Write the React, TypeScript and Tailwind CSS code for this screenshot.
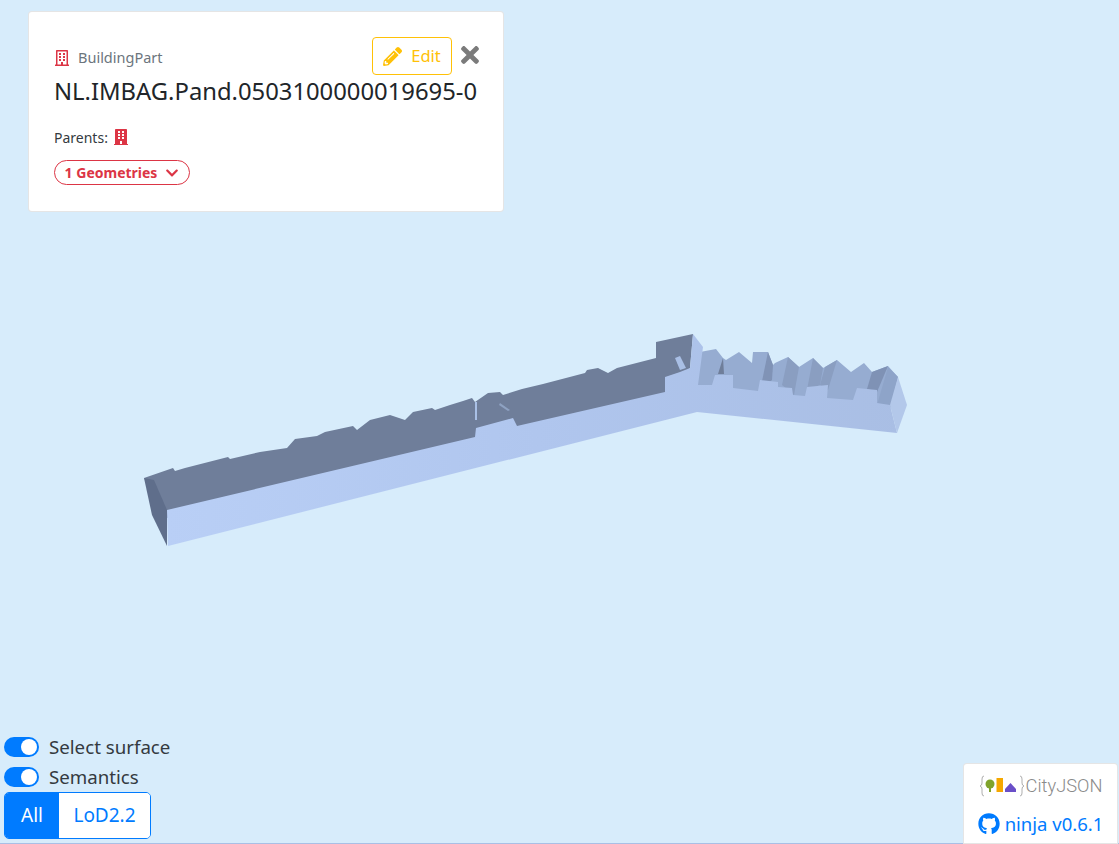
import { FaBuilding, FaRegBuilding, FaPencilAlt, FaTimes, FaChevronDown, FaGithub } from 'react-icons/fa';

const font = { fontFamily: '"Noto Sans", "Open Sans", sans-serif' };

function Model() {
  return (
    <svg className="absolute inset-0 blur-[0.4px]" width="1119" height="844" viewBox="0 0 1119 844">
      <defs>
        <linearGradient id="wall" x1="167" y1="0" x2="907" y2="0" gradientUnits="userSpaceOnUse">
          <stop offset="0" stopColor="#b9cff6" />
          <stop offset="0.5" stopColor="#b0c6ee" />
          <stop offset="1" stopColor="#a9bee4" />
        </linearGradient>
      </defs>
      {/* back roof face of the long wing */}
      <polygon
        fill="#6f7e9a"
        points="144,478 173,468 175,471 185,468 228,457 230,459 260,452 287,448 295,439 317,436 325,432 353,426 357,430 370,420 390,415 405,420 413,412 432,408 435,410 450,405 463,401 472,398 475,402 488,393 500,392 503,395 522,389 543,384 585,373 587,370 598,368 608,373 617,368 656,358 656,342 693,334 690,368 665,400 517,434 475,445 167,518"
      />
      <polygon fill="#5f6e8b" points="144,478 154,480 167,510 167,546 152,515" />
      {/* gables on the short wing, the wall below cuts their lower edge */}
      <polygon
        fill="#96acd1"
        points="696,390 700,352 716,349 723,358 726,360 739,352 752,363 753,352 768,352 773,365 775,363 788,357 799,367 813,358 823,368 825,367 837,360 851,372 864,363 872,372 888,366 898,377 890,410 700,395"
      />
      <polygon fill="#6f7e9a" points="723,358 724,374 718,374" />
      <polygon fill="#8093b6" points="768,352 773,365 772,380 760,391" />
      <polygon fill="#8a9ec1" points="788,357 799,367 794,395 782,385" />
      <polygon fill="#8a9ec1" points="813,358 823,368 820,385 807,390" />
      <polygon fill="#8a9ec1" points="825,367 837,360 828,390 820,385" />
      <polygon fill="#7f92b5" points="872,372 888,366 877,392 867,389" />
      <polygon fill="#8ea4c9" points="877,405 888,367 898,377 890,408" />
      {/* wall faces */}
      <polygon
        fill="url(#wall)"
        points="167,510 475,437 476,428 513,418 517,426 665,392 665,377 680,372 690,368 693,334 703,347 698,385 712,385 715,375 733,375 733,388 758,391 760,380 778,382 778,387 792,388 793,395 805,396 807,387 828,385 827,398 853,400 857,388 877,390 877,403 890,405 897,433 697,412 168,546"
      />
      <polygon fill="#b3c8ea" points="890,405 898,377 907,405 897,433" />
      <polygon fill="#a9bfe5" points="675,358 680,356 686,368 680,370" />
      {/* cuts in the long roof */}
      <polygon fill="#a9c0e6" points="475,402 477,402 477,420 475,420" />
      <polygon fill="#8ea2c2" points="500,403 510,410 508,411 499,405" />
    </svg>
  );
}

function Logo() {
  return (
    <div className="flex items-center h-[28px] text-[#8a8a8a]">
      <svg width="46" height="26" viewBox="0 0 46 26" className="mr-[1px]">
        <path d="M5 3 Q3 3 3 6 V10 Q3 12.500 1 13 Q3 13.500 3 16 V20 Q3 23 5 23" fill="none" stroke="#9a9a9a" strokeWidth="0.8" />
        <path d="M41 3 Q43 3 43 6 V10 Q43 12.500 45 13 Q43 13.500 43 16 V20 Q43 23 41 23" fill="none" stroke="#9a9a9a" strokeWidth="0.8" />
        <circle cx="11" cy="11" r="4.500" fill="#7fa32b" />
        <rect x="10" y="14" width="2" height="5" fill="#7fa32b" />
        <rect x="17.500" y="5" width="6.500" height="14" fill="#f5a800" />
        <polygon points="26,19 26,16 31.500,10 37,16 37,19" fill="#6a4fc8" />
      </svg>
      <span className="text-[18.300px] font-light leading-none" style={{ fontFamily: 'Roboto, sans-serif' }}>
        CityJSON
      </span>
    </div>
  );
}

export default function App() {
  return (
    <div className="relative w-[1119px] h-[844px] overflow-hidden bg-[#d7ecfb] text-[#212529]" style={font}>
      <Model />
      <div className="absolute left-0 right-0 bottom-0 h-px bg-[#a9bfe5]" />

      <div className="absolute left-[28px] top-[11px] w-[476px] h-[201px] bg-white border border-black/10 rounded pl-[25px] pr-[24px] pt-[25px]">
        <div className="flex items-center justify-between h-[38px]">
          <div className="flex items-center gap-[8px] text-[14.5px] text-[#6c757d] mt-[4px]">
            <FaRegBuilding className="text-[#dc3545] text-[16px]" />
            <span>BuildingPart</span>
          </div>
          <div className="flex items-center gap-[5px] mr-[-4px]">
            <button className="flex items-center gap-[9px] h-[38px] w-[80px] justify-center border border-[#ffc107] rounded text-[#ffc107] text-[16.500px]">
              <FaPencilAlt className="text-[19px]" />
              Edit
            </button>
            <FaTimes className="text-[#7b7b7b] text-[26px] mb-[3px]" />
          </div>
        </div>
        <div className="text-[23.800px] leading-[32px] whitespace-nowrap">NL.IMBAG.Pand.0503100000019695-0</div>
        <div className="flex items-center gap-[5px] mt-[20px] text-[14px] text-[#343a40] h-[20px]">
          <span>Parents:</span>
          <FaBuilding className="text-[#dc3545] text-[16px]" />
        </div>
        <div className="mt-[13px] flex items-center gap-[8px] w-[136px] h-[25px] justify-center border border-[#dc3545] rounded-full text-[#dc3545] text-[14px] font-bold">
          1 Geometries
          <FaChevronDown className="text-[14px]" />
        </div>
      </div>

      <div className="absolute left-[4px] bottom-[5px] flex flex-col items-start">
        <div className="flex items-center gap-[10px] h-[30px] text-[18.700px] text-[#343a40]">
          <span className="w-[35px] h-[20px] rounded-full bg-[#007bff] flex items-center justify-end pr-[2px]">
            <span className="w-[16px] h-[16px] rounded-full bg-white" />
          </span>
          Select surface
        </div>
        <div className="flex items-center gap-[10px] h-[30px] text-[18.700px] text-[#343a40]">
          <span className="w-[35px] h-[20px] rounded-full bg-[#007bff] flex items-center justify-end pr-[2px]">
            <span className="w-[16px] h-[16px] rounded-full bg-white" />
          </span>
          Semantics
        </div>
        <div className="flex h-[47px] text-[19px] rounded-[5px] overflow-hidden border border-[#007bff]">
          <span className="w-[54px] bg-[#007bff] text-white flex items-center justify-center">All</span>
          <span className="w-[91px] bg-white text-[#007bff] flex items-center justify-center">LoD2.2</span>
        </div>
      </div>

      <div className="absolute right-[1px] bottom-0 w-[155px] h-[81px] bg-white border border-black/10 rounded-t flex flex-col items-center pt-[8px]">
        <Logo />
        <a className="flex items-center gap-[5px] mt-[10px] text-[18.500px] text-[#007bff]">
          <FaGithub className="text-[22px]" />
          ninja v0.6.1
        </a>
      </div>
    </div>
  );
}
